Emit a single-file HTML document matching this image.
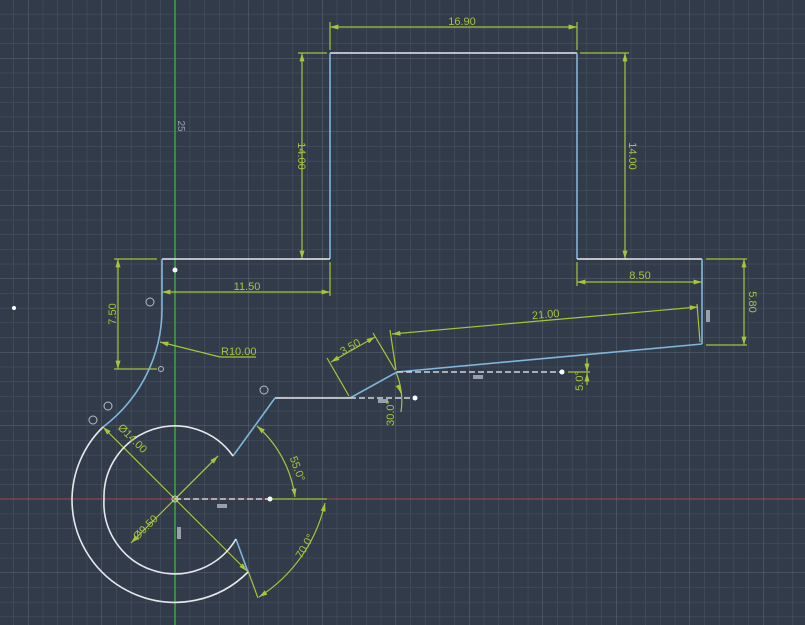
<!DOCTYPE html>
<html><head><meta charset="utf-8"><style>
html,body{margin:0;padding:0;background:#313b4a;overflow:hidden}
svg{display:block}
text{font-family:"Liberation Sans",sans-serif;font-size:11px;fill:#a7c43c}
</style></head><body>
<svg width="805" height="625" viewBox="0 0 805 625" xmlns="http://www.w3.org/2000/svg">
<defs>
<pattern id="minor" x="175" y="499" width="14.7" height="14.7" patternUnits="userSpaceOnUse">
<path d="M0 0V14.7M0 0H14.7" stroke="#4a5462" stroke-width="1" fill="none"/>
</pattern>
<pattern id="major" x="175" y="499" width="73.5" height="73.5" patternUnits="userSpaceOnUse">
<path d="M0 0V73.5M0 0H73.5" stroke="#5e6774" stroke-width="1" fill="none"/>
</pattern>
<marker id="ar" viewBox="0 0 10 10" refX="10" refY="5" markerWidth="7" markerHeight="7" orient="auto-start-reverse"><path d="M0 2L10 5L0 8z" fill="#a7c43c"/></marker>
</defs>
<rect width="805" height="625" fill="#313b4a"/>
<rect width="805" height="625" fill="url(#minor)"/>
<rect width="805" height="625" fill="url(#major)"/>
<line x1="175" y1="0" x2="175" y2="625" stroke="#3fa343" stroke-width="1.5"/>
<line x1="0" y1="499" x2="805" y2="499" stroke="#a8444c" stroke-width="1"/>

<g stroke="#a7c43c" stroke-width="1.2" fill="none">
<line x1="330" y1="50" x2="330" y2="22"/><line x1="577" y1="50" x2="577" y2="22"/>
<line x1="330" y1="27" x2="577" y2="27" marker-start="url(#ar)" marker-end="url(#ar)"/>
<line x1="327" y1="53" x2="298" y2="53"/><line x1="327" y1="259" x2="298" y2="259"/>
<line x1="302" y1="53" x2="302" y2="259" marker-start="url(#ar)" marker-end="url(#ar)"/>
<line x1="580" y1="53" x2="629" y2="53"/><line x1="580" y1="259" x2="629" y2="259"/>
<line x1="625" y1="53" x2="625" y2="259" marker-start="url(#ar)" marker-end="url(#ar)"/>
<line x1="577" y1="262" x2="577" y2="286"/><line x1="702" y1="262" x2="702" y2="286"/>
<line x1="577" y1="282" x2="702" y2="282" marker-start="url(#ar)" marker-end="url(#ar)"/>
<line x1="706" y1="259" x2="747" y2="259"/><line x1="706" y1="345" x2="747" y2="345"/>
<line x1="744" y1="259" x2="744" y2="345" marker-start="url(#ar)" marker-end="url(#ar)"/>
<line x1="162" y1="262" x2="162" y2="296"/><line x1="330" y1="262" x2="330" y2="296"/>
<line x1="162" y1="292" x2="330" y2="292" marker-start="url(#ar)" marker-end="url(#ar)"/>
<line x1="157" y1="259" x2="114" y2="259"/><line x1="157" y1="369" x2="114" y2="369"/>
<line x1="118" y1="259" x2="118" y2="369" marker-start="url(#ar)" marker-end="url(#ar)"/>
<line x1="220" y1="357" x2="256" y2="357"/>
<line x1="220" y1="357" x2="160" y2="342" marker-end="url(#ar)"/>
<line x1="396" y1="370" x2="390" y2="330"/><line x1="700" y1="342" x2="697" y2="304"/>
<line x1="392" y1="334" x2="698" y2="307" marker-start="url(#ar)" marker-end="url(#ar)"/>
<line x1="349" y1="396" x2="327" y2="358"/><line x1="395" y1="370" x2="373" y2="333"/>
<line x1="331" y1="362" x2="375" y2="337" marker-start="url(#ar)" marker-end="url(#ar)"/>
<line x1="568" y1="372" x2="590" y2="372"/>
<line x1="587" y1="358" x2="587" y2="372" marker-end="url(#ar)"/>
<line x1="587" y1="385" x2="587" y2="373" marker-end="url(#ar)"/>
<path d="M396 372 Q404 392 401 412"/>
<line x1="398" y1="385" x2="401" y2="393" marker-end="url(#ar)"/>
<line x1="103" y1="427" x2="247" y2="571" marker-start="url(#ar)" marker-end="url(#ar)"/>
<line x1="131" y1="543" x2="218" y2="456" marker-start="url(#ar)" marker-end="url(#ar)"/>
<line x1="175" y1="499" x2="218" y2="456"/>
<line x1="270" y1="499" x2="327" y2="499"/>
<path d="M257 426 A115 115 0 0 1 295 497" marker-start="url(#ar)" marker-end="url(#ar)"/>
<line x1="248" y1="571" x2="258" y2="598"/>
<path d="M325 503 A150 150 0 0 1 259 597" marker-start="url(#ar)" marker-end="url(#ar)"/>
</g>

<g fill="none" stroke-width="1.6">
<path d="M330 53H577" stroke="#e6e8ec"/>
<path d="M330 53V259" stroke="#7fb6dc"/>
<path d="M577 53V259" stroke="#7fb6dc"/>
<path d="M162 259H330M577 259H702" stroke="#e6e8ec"/>
<path d="M702 259V344" stroke="#7fb6dc"/>
<path d="M702 344L397 372L350 398" stroke="#7fb6dc"/>
<path d="M350 398H275" stroke="#e6e8ec"/>
<path d="M275 398L233 456" stroke="#7fb6dc"/>
<path d="M162 259V308A148 148 0 0 1 103 427" stroke="#7fb6dc"/>
<path d="M103 427A103 103 0 0 0 72 499A103 103 0 0 0 248 572" stroke="#e6e8ec"/>
<path d="M248 572L236 539" stroke="#7fb6dc"/>
<path d="M236 539A71 71 0 0 1 104 499A71 71 0 0 1 233 456" stroke="#e6e8ec"/>
</g>
<g stroke="#d0d4da" stroke-width="1.5" stroke-dasharray="6,3" fill="none">
<line x1="175" y1="499" x2="270" y2="499"/>
<line x1="397" y1="372" x2="562" y2="372"/>
<line x1="350" y1="398" x2="415" y2="398"/>
</g>
<g fill="#fff">
<circle cx="270" cy="499" r="2.5"/><circle cx="562" cy="372" r="2.5"/><circle cx="415" cy="398" r="2.5"/>
<circle cx="175" cy="270" r="2.5"/><circle cx="14" cy="308" r="2"/>
</g>
<circle cx="175" cy="499" r="3" fill="none" stroke="#ccc"/>
<g fill="none" stroke="#b8bcc2" stroke-width="1">
<circle cx="150" cy="302" r="4"/><circle cx="108" cy="406" r="4"/><circle cx="93" cy="420" r="4"/><circle cx="264" cy="390" r="4"/><circle cx="161" cy="369" r="2.5"/>
</g>
<g fill="#9aa0a8">
<rect x="217" y="504" width="10" height="4"/><rect x="177" y="527" width="4" height="12"/>
<rect x="473" y="375" width="10" height="4"/><rect x="378" y="399" width="10" height="4"/><rect x="706" y="310" width="4" height="12"/>
</g>

<text x="462" y="25" text-anchor="middle">16.90</text>
<text transform="translate(298,156) rotate(90)" text-anchor="middle">14.00</text>
<text transform="translate(629,156) rotate(90)" text-anchor="middle">14.00</text>
<text x="640" y="279" text-anchor="middle">8.50</text>
<text transform="translate(749,302) rotate(90)" text-anchor="middle">5.80</text>
<text x="247" y="290" text-anchor="middle">11.50</text>
<text transform="translate(116,314) rotate(-90)" text-anchor="middle">7.50</text>
<text x="221" y="355">R10.00</text>
<text transform="translate(352,350) rotate(-30)" text-anchor="middle">3.50</text>
<text transform="translate(546,318) rotate(-5)" text-anchor="middle">21.00</text>
<text transform="translate(583,381) rotate(-90)" text-anchor="middle">5.0°</text>
<text transform="translate(394,413) rotate(-90)" text-anchor="middle">30.0°</text>
<text transform="translate(294,470) rotate(70)" text-anchor="middle">55.0°</text>
<text transform="translate(308,548) rotate(-60)" text-anchor="middle">70.0°</text>
<text transform="translate(130,441) rotate(45)" text-anchor="middle">Ø14.00</text>
<text transform="translate(148,530) rotate(-45)" text-anchor="middle">Ø9.50</text>
<text transform="translate(178,126) rotate(90)" text-anchor="middle" style="fill:#9aa0a8;font-size:10px">25</text>
</svg>
</body></html>
